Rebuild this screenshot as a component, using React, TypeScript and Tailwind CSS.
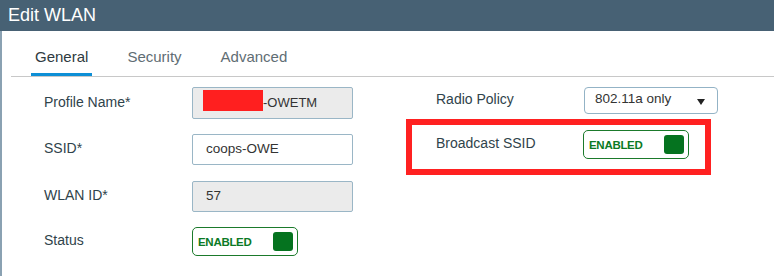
function Toggle() {
  return (
    <div className="flex h-[29px] w-[106px] items-center justify-between rounded-[5px] border border-[#1b7a2b] bg-white pl-[5px] pr-[4px]">
      <span className="mt-[3px] text-[11.5px] font-bold leading-none tracking-[-0.3px] text-[#0b7a25]">ENABLED</span>
      <span className="mb-[1px] h-[19px] w-[20px] rounded-[3px] bg-[#05731f]" />
    </div>
  );
}

function Label({ children, className = "" }: { children: React.ReactNode; className?: string }) {
  return <div className={`shrink-0 pb-[2px] text-[14px] text-[#2f434b] ${className}`}>{children}</div>;
}

export default function App() {
  return (
    <div className="h-[276px] w-[774px] overflow-hidden bg-white font-['Liberation_Sans',Arial,sans-serif]">
      <div className="flex h-[31px] items-center bg-[#476174] pl-2 text-[18px] text-white">Edit WLAN</div>

      <div className="h-[245px] border-l-2 border-[#8aa1b2]">
        {/* tabs */}
        <div className="ml-[9px] flex h-[46px] gap-[31px] border-b border-[#c8c8c8] pl-[20px] text-[15px]">
          <div className="flex h-[45px] items-end border-b-[3px] border-[#0d8fd6] px-1 pb-[5px] text-[#2e3a40]">General</div>
          <div className="flex h-[45px] items-end border-b-[3px] border-transparent px-1 pb-[5px] text-[#5f6d74]">Security</div>
          <div className="flex h-[45px] items-end border-b-[3px] border-transparent px-1 pb-[5px] text-[#5f6d74]">Advanced</div>
        </div>

        <div className="flex">
          {/* left column */}
          <div className="w-[404px] shrink-0">
            <div className="mt-[10px] flex h-[32px] items-center">
              <Label className="w-[190px] pl-[42px]">Profile Name*</Label>
              <div className="flex h-[32px] w-[161px] items-center rounded-[2px] border border-[#9ab6c6] bg-[#ebebeb] pl-[10px] text-[13px] text-[#333]">
                <span className="mb-[5px] h-[21px] w-[60px] bg-[#ff1f1f]" />
                <span>-OWETM</span>
              </div>
            </div>
            <div className="mt-[15px] flex h-[31px] items-center">
              <Label className="w-[190px] pl-[42px]">SSID*</Label>
              <div className="flex h-[31px] w-[161px] items-center rounded-[2px] border border-[#9ab6c6] bg-white pl-[13px] text-[13.5px] text-[#333]">
                coops-OWE
              </div>
            </div>
            <div className="mt-[16px] flex h-[31px] items-center">
              <Label className="w-[190px] pl-[42px]">WLAN ID*</Label>
              <div className="flex h-[31px] w-[161px] items-center rounded-[2px] border border-[#9ab6c6] bg-[#ebebeb] pl-[13px] text-[13.5px] text-[#333]">
                57
              </div>
            </div>
            <div className="mt-[15px] flex h-[29px] items-center">
              <Label className="w-[190px] pl-[42px]">Status</Label>
              <Toggle />
            </div>
          </div>

          {/* right column */}
          <div>
            <div className="mt-[10px] flex h-[27px] items-center">
              <Label className="w-[178px] pl-[30px]">Radio Policy</Label>
              <div className="flex h-[27px] w-[134px] items-center justify-between rounded-[4px] border border-[#93b3c6] pl-[10px] pr-[12px] text-[13.5px] text-[#333]">
                <span className="mb-[2px]">802.11a only</span>
                <svg width="8" height="6" viewBox="0 0 8 6" className="mt-[3px]">
                  <polygon points="0,0 8,0 4,6" fill="#222" />
                </svg>
              </div>
            </div>
            <div className="mt-[5px] flex h-[56px] w-[305px] items-start border-[6px] border-[#ff2121] pt-[5px]">
              <Label className="flex h-[29px] w-[171px] items-center pl-[24px]">Broadcast SSID</Label>
              <Toggle />
            </div>
          </div>
        </div>
      </div>
    </div>
  );
}
